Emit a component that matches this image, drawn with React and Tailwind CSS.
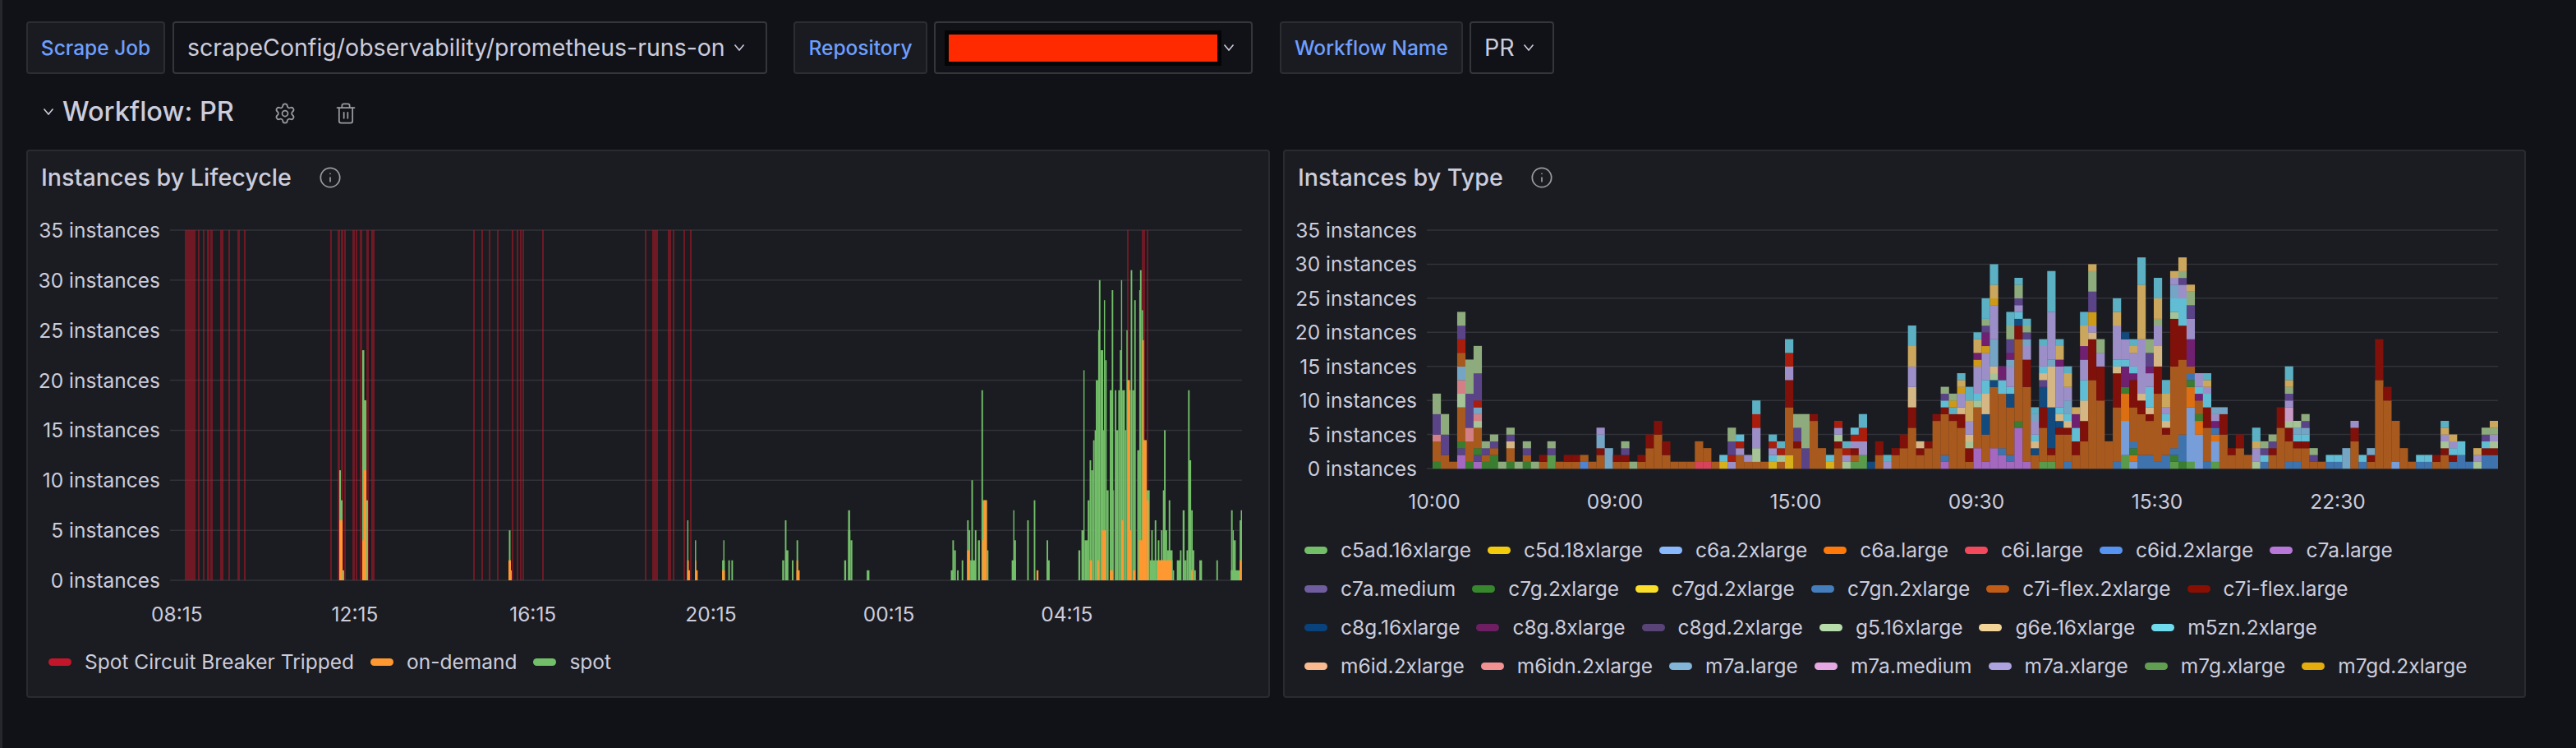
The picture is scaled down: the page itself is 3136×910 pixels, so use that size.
import { Info, Settings, Trash2 } from "lucide-react";

const stackColors = {
  o: "#a8591e", r: "#7f110a", R: "#a81d0c", g: "#3a7c30", G: "#8eab7d", v: "#5a4487",
  P: "#a468c0", p: "#d28085", S: "#a5c396", l: "#74a5c5", L: "#9c8fc8", T: "#5bb0c3",
  t: "#61bdd3", Y: "#cba75e", y: "#cd9a17", f: "#d4b785", B: "#3f73ad", b: "#779ed8",
  n: "#124a7e", m: "#6f2070", M: "#c79bc5", O: "#dc6f12", e: "#5a9a4b", H: "#d9435a",
  u: "#4f84d4", d: "#d8b11a",
};

// one entry per bar, bottom to top: letter + number of instances
const typeBars = [
  "go3pv3G3", "o2v3G3", "o", "P2vgo5S2p2l2o2R2v2G2", "go3p2v5G5", "Pvgo3SplRv4G4", "govG", "g2ovG", "G", "go2fvG",
  "G", "govG", "G", "or", "e2vG", "o", "or", "or", "uo", "o",
  "o2rl2L", "l3", "or", "orvG", "G", "or", "o3r2", "o5r2", "o2r2", "o",
  "o", "o", "Ho3", "Ho2", "o", "dt", "LRv2G2", "o2LRt", "oL", "oS2L3R2T2",
  "o", "dtLRT", "oSRT", "d2o7r4L2R2T2", "o3rv2G2", "v3G5", "o7r", "o3", "dt", "o3rSLR",
  "SLRT", "eorLRt", "e2L2R2T2", "n", "o2r2", "LT", "o2r", "o3r2", "o6r3f3L3Y3T3", "o2rf",
  "o3r", "o7r", "PBo6rtvG", "o7rTyG", "o6r2fL2yYT", "or2SfL2Y3T2", "P3o6StL4ymY2T", "Po4n3f3t2L4ym2vGT3", "P3o9nSfl4L5yY2T3", "P2Bo8t2m2",
  "PBo7n2tL3lmv2G2T2", "P6go12r2ntLvG2T", "Po11r4L2lvGT", "o2nftL2lT", "eo5r3n3vftL3T", "eorn6f6lL7T6", "o5rnftL6mY2T", "Bo4rftl2L2Y2T", "o2r2t2m2Y", "o4r3f3t3L3m2Y3T2",
  "o13r6fLy2v3G3Y", "o10r5L2G2", "o4", "Bo8r5ftL5Y2T2", "e2b5O4gm3tL3n", "bOgBo5r4mtL2YT", "B2o6r2fL8Y8T4", "B2o5rft3L2mv2G2", "Bo10r4f3L3GY3T3", "B2o3rftLY2T2",
  "egBo12r7St2l2LY", "gB4o11r5t4L2vGY2", "eb8O3gBom4L3v2G2Y", "b5O2go2mtL2", "Bo5r3t2LYT", "eb3OBmLl", "o5r3l", "o2r", "o3r2", "o2",
  "SL2YT2", "BtvG", "o2rvG", "o6r3", "Bo3r2SM2LvGYT2", "Bo2rtlS", "o3rtlvG", "ovG", "o", "Bt",
  "Bt", "l3", "o4r2L", "Bt", "orl", "o13r6", "o10r2", "bo6", "o3", "o",
  "Bt", "Bt", "or", "o2rSLYT", "BrtLY", "B2t2", "B", "SLY", "B2rtvG", "B2rSLGY",
];

const parseStack = (s) => {
  const out = [];
  for (const [, c, n] of s.matchAll(/([a-zA-Z])(\d*)/g)) out.push([c, n ? Number(n) : 1]);
  return out;
};

// spot circuit breaker markers, page x
const tripped = [
  [225, 235], [235, 238], [241, 243], [247, 249], [252, 255], [256, 259], [268, 272], [278, 280], [289, 292], [297, 299],
  [402, 404], [411, 414], [415, 418], [419, 421], [429, 432], [433, 435], [438, 441], [446, 449], [452, 456],
  [576, 578], [586, 588], [595, 597], [605, 607], [623, 625], [629, 631], [633, 635], [636, 638], [660, 662],
  [785, 787], [794, 801], [813, 817], [819, 821], [832, 834], [840, 842], [1372, 1374], [1390, 1394], [1396, 1398],
];

// [x0, x1, instances], x in chart px before the 780 + x / 2.119 mapping
const spot = [
  [120, 123, 6], [140, 143, 4], [210, 217, 2], [213, 216, 4], [226, 230, 2], [234, 238, 2], [365, 370, 2], [372, 376, 6], [375, 381, 3], [390, 394, 2],
  [402, 406, 4], [525, 530, 2], [535, 540, 7], [535, 541, 5], [541, 546, 4], [583, 590, 1], [800, 806, 1], [804, 808, 4], [808, 813, 3], [816, 820, 1],
  [828, 832, 2], [842, 846, 6], [846, 850, 5], [853, 857, 10], [850, 865, 2], [862, 866, 5], [870, 875, 4], [879, 883, 19], [881, 893, 8], [893, 897, 3],
  [957, 968, 2], [961, 964, 7], [964, 968, 4], [997, 1001, 6], [1014, 1018, 8], [1047, 1051, 4], [1047, 1055, 2], [1129, 1134, 3], [1137, 1142, 5], [1142, 1145, 21],
  [1145, 1153, 4], [1153, 1158, 8], [1158, 1162, 12], [1162, 1167, 11], [1167, 1171, 14], [1171, 1174, 15], [1174, 1180, 20], [1180, 1184, 25], [1182, 1186, 30], [1186, 1193, 23],
  [1193, 1195, 15], [1195, 1198, 28], [1198, 1202, 22], [1202, 1207, 9], [1210, 1216, 19], [1215, 1219, 29], [1219, 1221, 9], [1223, 1227, 19], [1227, 1232, 15], [1232, 1236, 19],
  [1236, 1240, 23], [1239, 1242, 30], [1242, 1249, 19], [1249, 1253, 15], [1253, 1256, 25], [1256, 1260, 20], [1260, 1264, 19], [1264, 1268, 31], [1268, 1273, 19], [1273, 1277, 28],
  [1281, 1286, 13], [1286, 1290, 29], [1288, 1292, 31], [1292, 1296, 27], [1296, 1305, 14], [1305, 1313, 9], [1313, 1330, 2], [1317, 1321, 5], [1326, 1330, 6], [1334, 1338, 4],
  [1330, 1372, 2], [1342, 1346, 5], [1347, 1352, 9], [1350, 1354, 15], [1354, 1358, 5], [1362, 1366, 8], [1358, 1372, 3], [1372, 1376, 1], [1383, 1393, 2], [1391, 1395, 3],
  [1398, 1403, 7], [1403, 1408, 2], [1408, 1412, 3], [1412, 1416, 19], [1415, 1420, 12], [1420, 1424, 7], [1424, 1428, 3], [1428, 1432, 1], [1441, 1448, 2], [1485, 1489, 2],
  [1523, 1527, 7], [1527, 1530, 5], [1530, 1535, 4], [1522, 1549, 1], [1545, 1549, 6], [1548, 1552, 7],
];

const onDemand = [
  [120, 127, 1], [120, 124, 2], [140, 147, 1], [140, 143, 2], [210, 217, 1], [402, 410, 1], [402, 406, 2], [842, 848, 3], [881, 890, 4], [885, 893, 8],
  [1021, 1026, 1], [1158, 1164, 2], [1178, 1182, 2], [1190, 1200, 5], [1210, 1218, 1], [1240, 1245, 6], [1255, 1262, 20], [1258, 1265, 5], [1270, 1276, 1], [1285, 1300, 4],
  [1294, 1298, 24], [1297, 1305, 14], [1305, 1310, 8], [1333, 1370, 2], [1420, 1424, 1], [1545, 1549, 2],
];

// the three early bursts, page x
const earlySpot = [[413, 415, 11], [415, 417, 8], [417, 419, 1], [441, 443.5, 23], [443, 446, 18], [446, 448, 8], [619.5, 621.5, 5]];
const earlyOrange = [[413, 417, 6], [441, 446, 4], [443, 446, 11], [619, 622, 2], [619, 623, 1]];

function AngleDown({ className }) {
  return (
    <svg viewBox="0 0 14 10" className={className} fill="none" stroke="currentColor" strokeWidth="1.6">
      <path d="M1.5 1.5 7 8l5.5-6.5" />
    </svg>
  );
}

function LifecycleChart() {
  const unit = 426 / 35;
  const px = (x) => 780 + x / 2.119;
  return (
    <svg viewBox="207 265 1305 456" className="w-[1305px] h-[456px] shrink-0">
      {[0, 1, 2, 3, 4, 5, 6, 7].map((i) => (
        <line key={i} x1="207" x2="1512" y1={706 - i * 60.86} y2={706 - i * 60.86} stroke="#323338" strokeWidth="1.5" />
      ))}
      {tripped.map(([a, b]) => (
        <rect key={a} x={a} y="280" width={b - a} height="426" fill="#c4162a" fillOpacity="0.5" />
      ))}
      {earlySpot.map(([a, b, h], i) => (
        <rect key={i} x={a} y={706 - h * unit} width={b - a} height={h * unit} fill="#73bf69" />
      ))}
      {spot.map(([a, b, h], i) => (
        <rect key={i} x={px(a)} y={706 - h * unit} width={(b - a) / 2.119} height={h * unit} fill="#73bf69" />
      ))}
      {earlyOrange.map(([a, b, h], i) => (
        <rect key={i} x={a} y={706 - h * unit} width={b - a} height={h * unit} fill="#ff9830" />
      ))}
      {onDemand.map(([a, b, h], i) => (
        <rect key={i} x={px(a)} y={706 - h * unit} width={(b - a) / 2.119} height={h * unit} fill="#ff9830" />
      ))}
    </svg>
  );
}

function TypeChart() {
  const unit = 290 / 35;
  const pitch = 1297 / 130;
  return (
    <svg viewBox="1737 265 1304 320" className="w-[1304px] h-[320px] shrink-0">
      {[0, 1, 2, 3, 4, 5, 6, 7].map((i) => (
        <line key={i} x1="1737" x2="3041" y1={570 - i * 41.43} y2={570 - i * 41.43} stroke="#323338" strokeWidth="1.5" />
      ))}
      {typeBars.map((bar, k) => {
        let used = 0;
        return parseStack(bar).map(([c, n], i) => {
          used += n;
          return (
            <rect
              key={`${k}-${i}`}
              x={1744 + k * pitch}
              y={570 - used * unit}
              width={pitch + 0.2}
              height={n * unit + 0.2}
              fill={stackColors[c]}
            />
          );
        });
      })}
    </svg>
  );
}

function VarLabel({ width, children }) {
  return (
    <div className={`${width} h-full flex items-center justify-center shrink-0 rounded-[4px] border-2 border-[#2c2d32] bg-[#1a1b20] text-[24.5px] font-medium whitespace-nowrap text-[#6e9fff]`}>
      {children}
    </div>
  );
}

function YAxis({ height }) {
  return (
    <div className={`${height} w-[145px] shrink-0 mr-3 flex flex-col justify-between items-end whitespace-nowrap text-[24.5px] leading-[30px] text-[#ccccdc]`}>
      {[35, 30, 25, 20, 15, 10, 5, 0].map((n) => (
        <span key={n}>{n} instances</span>
      ))}
    </div>
  );
}

function LegendItem({ color, label }) {
  return (
    <div className="flex items-center">
      <span className="w-[28px] h-[9px] rounded-full mr-4" style={{ backgroundColor: color }} />
      <span className="text-[24.5px] leading-[30px] whitespace-nowrap text-[#ccccdc]">{label}</span>
    </div>
  );
}

const typeLegend = [
  [["#73bf69", "c5ad.16xlarge"], ["#f2cc0c", "c5d.18xlarge"], ["#8ab8ff", "c6a.2xlarge"], ["#ff780a", "c6a.large"], ["#f2495c", "c6i.large"], ["#5794f2", "c6id.2xlarge"], ["#b877d9", "c7a.large"]],
  [["#705da0", "c7a.medium"], ["#37872d", "c7g.2xlarge"], ["#fade2a", "c7gd.2xlarge"], ["#447ebc", "c7gn.2xlarge"], ["#c15c17", "c7i-flex.2xlarge"], ["#890f02", "c7i-flex.large"]],
  [["#0a437c", "c8g.16xlarge"], ["#6d1f62", "c8g.8xlarge"], ["#584477", "c8gd.2xlarge"], ["#b7dbab", "g5.16xlarge"], ["#f4d598", "g6e.16xlarge"], ["#70dbed", "m5zn.2xlarge"]],
  [["#f9ba8f", "m6id.2xlarge"], ["#f29191", "m6idn.2xlarge"], ["#82b5d8", "m7a.large"], ["#e5a8e2", "m7a.medium"], ["#aea2e0", "m7a.xlarge"], ["#629e51", "m7g.xlarge"], ["#e5ac0e", "m7gd.2xlarge"]],
];

export default function App() {
  return (
    <div className="w-[3136px] h-[910px] overflow-hidden border-l-[3px] border-[#26272c] bg-[#111217] pl-[29px] pt-[26px] font-['Inter',sans-serif] text-[#ccccdc]">
      {/* Variables */}
      <div className="flex h-[64px] items-center">
        <VarLabel width="w-[169px]">Scrape Job</VarLabel>
        <div className="ml-[9px] w-[724px] h-full flex items-center shrink-0 rounded-[4px] border-2 border-[#35363b] pl-[16px] text-[28.5px]">
          <span>scrapeConfig/observability/prometheus-runs-on</span>
          <AngleDown className="w-[14px] h-[10px] ml-[10px]" />
        </div>
        <div className="ml-[32px] h-full">
          <VarLabel width="w-[163px]">Repository</VarLabel>
        </div>
        <div className="ml-[8px] w-[388px] h-full flex items-center shrink-0 rounded-[4px] border-2 border-[#35363b] pl-[11px]">
          <div className="w-[337px] h-[43px] bg-[#050505] flex items-center justify-center">
            <div className="w-[327px] h-[33px] bg-[#ff2a00]" />
          </div>
          <AngleDown className="w-[14px] h-[10px] ml-[2px]" />
        </div>
        <div className="ml-[33px] h-full">
          <VarLabel width="w-[223px]">Workflow Name</VarLabel>
        </div>
        <div className="ml-[8px] w-[103px] h-full flex items-center shrink-0 rounded-[4px] border-2 border-[#35363b] pl-[16px] text-[28.5px]">
          <span>PR</span>
          <AngleDown className="w-[14px] h-[10px] ml-[10px]" />
        </div>
      </div>

      {/* Row header */}
      <div className="mt-[19px] h-[54px] flex items-center pl-[20px]">
        <AngleDown className="w-[14px] h-[10px]" />
        <span className="ml-[10px] text-[32.5px] font-medium">Workflow: PR</span>
        <Settings className="ml-[48px] mt-[4px] w-[28px] h-[28px] text-[#9a9ba2]" strokeWidth={1.5} />
        <Trash2 className="ml-[46px] mt-[4px] w-[28px] h-[28px] text-[#9a9ba2]" strokeWidth={1.5} />
      </div>

      {/* Panels */}
      <div className="mt-[19px] flex gap-4">
        <div className="w-[1514px] h-[667px] shrink-0 rounded-[4px] border-2 border-[#2a2b30] bg-[#1a1c21] pl-4">
          <div className="h-[64px] flex items-center">
            <span className="text-[28.7px] font-medium leading-none whitespace-nowrap">Instances by Lifecycle</span>
            <Info className="ml-[33px] w-[28px] h-[28px] text-[#9a9ba2]" strokeWidth={1.5} />
          </div>
          <div className="mt-[17px] flex">
            <YAxis height="h-[456px]" />
            <LifecycleChart />
          </div>
          <div className="mt-[11px] ml-[57px] grid grid-cols-[repeat(6,216.7px)] text-center text-[24.5px] leading-[30px]">
            {["08:15", "12:15", "16:15", "20:15", "00:15", "04:15"].map((t) => (
              <span key={t}>{t}</span>
            ))}
          </div>
          <div className="mt-[28px] ml-[9px] flex gap-5">
            <LegendItem color="#c4162a" label="Spot Circuit Breaker Tripped" />
            <LegendItem color="#ff9830" label="on-demand" />
            <LegendItem color="#73bf69" label="spot" />
          </div>
        </div>

        <div className="w-[1513px] h-[667px] shrink-0 rounded-[4px] border-2 border-[#2a2b30] bg-[#1a1c21] pl-4">
          <div className="h-[64px] flex items-center">
            <span className="text-[28.7px] font-medium leading-none whitespace-nowrap">Instances by Type</span>
            <Info className="ml-[33px] w-[28px] h-[28px] text-[#9a9ba2]" strokeWidth={1.5} />
          </div>
          <div className="mt-[17px] flex">
            <YAxis height="h-[320px]" />
            <TypeChart />
          </div>
          <div className="mt-[10px] ml-[56px] grid grid-cols-[repeat(6,220px)] text-center text-[24.5px] leading-[30px]">
            {["10:00", "09:00", "15:00", "09:30", "15:30", "22:30"].map((t, i) => (
              <span key={i}>{t}</span>
            ))}
          </div>
          <div className="mt-[29px] ml-2 flex flex-col gap-[17px]">
            {typeLegend.map((row, i) => (
              <div key={i} className="flex gap-5">
                {row.map(([color, label]) => (
                  <LegendItem key={label} color={color} label={label} />
                ))}
              </div>
            ))}
          </div>
        </div>
      </div>
    </div>
  );
}
